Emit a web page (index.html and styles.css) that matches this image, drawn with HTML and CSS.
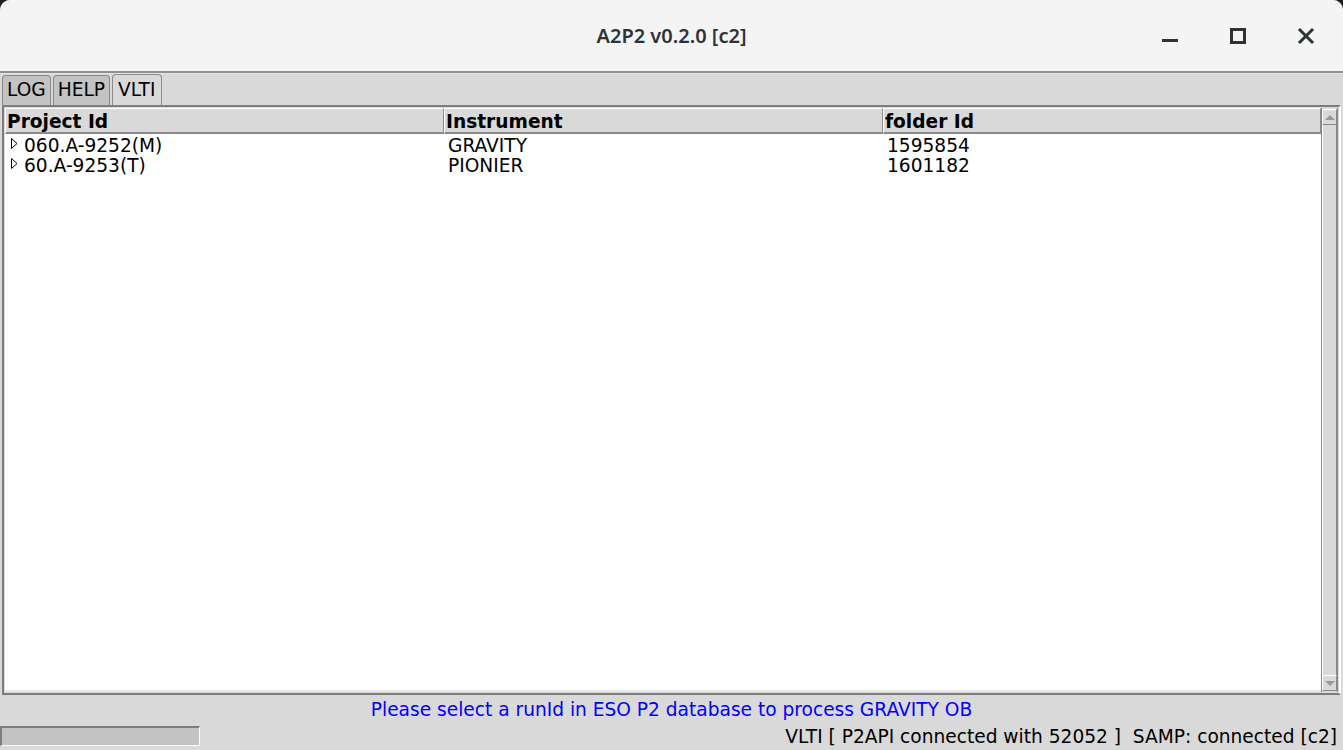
FILE: index.html
```html
<!DOCTYPE html>
<html>
<head>
<meta charset="utf-8">
<link rel="stylesheet" href="styles.css">
</head>
<body>
<div class="window">
  <div class="titlebar">
    <div class="title">A2P2 v0.2.0 [c2]</div>
    <div class="controls">
      <svg class="ctl" width="18" height="18" viewBox="0 0 18 18"><rect x="1" y="12" width="16" height="3" fill="#2e3436"/></svg>
      <svg class="ctl" width="18" height="18" viewBox="0 0 18 18"><rect x="2.5" y="2.5" width="13" height="13" fill="none" stroke="#2e3436" stroke-width="3"/></svg>
      <svg class="ctl" width="18" height="18" viewBox="0 0 18 18"><path d="M2 2 L16 16 M16 2 L2 16" stroke="#2e3436" stroke-width="3"/></svg>
    </div>
  </div>
  <div class="tabs">
    <div class="tab">LOG</div>
    <div class="tab">HELP</div>
    <div class="tab active">VLTI</div>
  </div>
  <div class="panel">
    <div class="tree">
      <div class="table">
        <div class="header">
          <div class="hcell">Project Id</div>
          <div class="hcell">Instrument</div>
          <div class="hcell">folder Id</div>
        </div>
        <div class="rows">
          <div class="row">
            <div class="cell first"><svg class="arrow" width="7" height="11" viewBox="0 0 7 11"><path d="M0.5 0.5 L6 5.5 L0.5 10.5 Z" fill="#fff" stroke="#000" stroke-width="1"/></svg>060.A-9252(M)</div>
            <div class="cell">GRAVITY</div>
            <div class="cell">1595854</div>
          </div>
          <div class="row">
            <div class="cell first"><svg class="arrow" width="7" height="11" viewBox="0 0 7 11"><path d="M0.5 0.5 L6 5.5 L0.5 10.5 Z" fill="#fff" stroke="#000" stroke-width="1"/></svg>60.A-9253(T)</div>
            <div class="cell">PIONIER</div>
            <div class="cell">1601182</div>
          </div>
        </div>
      </div>
      <div class="scrollbar">
        <div class="sbtn"><span class="up"></span></div>
        <div class="trough"></div>
        <div class="sbtn"><span class="down"></span></div>
      </div>
    </div>
  </div>
  <div class="message">Please select a runId in ESO P2 database to process GRAVITY OB</div>
  <div class="statusbar">
    <div class="progress"></div>
    <div class="status">VLTI [ P2API connected with 52052 ]&nbsp; SAMP: connected [c2]</div>
  </div>
</div>
</body>
</html>
```

FILE: styles.css
```css
* { box-sizing: border-box; }
html, body { margin: 0; padding: 0; background: #1e1e1e; }
body {
  width: 1343px; height: 750px; overflow: hidden;
  font-family: "DejaVu Sans", sans-serif;
}
.window {
  width: 1343px; height: 750px;
  display: flex; flex-direction: column;
  background: #d9d9d9;
  border-radius: 10px 10px 0 0;
  overflow: hidden;
}
.titlebar {
  height: 73px; flex: none;
  background: #f4f4f4;
  border-bottom: 2px solid #8f8f8b;
  position: relative;
  display: flex; align-items: center; justify-content: center;
}
.title {
  font-family: "Noto Sans", sans-serif;
  font-weight: 600;
  font-size: 20px;
  color: #2e3436;
  margin-top: -1px;
}
.controls {
  position: absolute; right: 28px; top: 27px;
  display: flex; gap: 50px;
}
.ctl { display: block; }
.tabs {
  height: 32px; flex: none;
  display: flex; align-items: flex-end;
  padding-left: 2px;
  border-top: 1px solid #e4e4e4;
}
.tab {
  height: 30px;
  padding: 0 4px;
  font-size: 18.6px; line-height: 28px; color: #000;
  background: #c3c3c3;
  border: 1px solid #8a8a8a;
  border-bottom: none;
  border-radius: 4px 4px 0 0;
  margin-right: 2px;
}
.tab.active { background: #d9d9d9; height: 31px; padding: 0 6px 0 5px; line-height: 29px; }
.panel {
  flex: 1;
  margin: 0 2px 0 2px;
  border-top: 2px solid #7d7d7d;
  border-left: 2px solid #7d7d7d;
  border-right: 2px solid #ffffff;
  border-bottom: 2px solid #7d7d7d;
  padding: 1px;
  display: flex;
}
.tree {
  flex: 1; display: flex;
  background: #d9d9d9;
}
.table {
  flex: 1; display: flex; flex-direction: column;
  background: #ffffff;
  border-bottom: 2px solid #e8e8e8;
}
.header {
  display: grid; grid-template-columns: 439px 439px 1fr;
  height: 26px; flex: none;
}
.hcell {
  background: #d9d9d9;
  border-top: 1px solid #ffffff;
  border-left: 1px solid #ffffff;
  border-right: 1px solid #8a8a8a;
  border-bottom: 2px solid #8a8a8a;
  font-weight: 700; font-size: 18.6px; line-height: 25px;
  padding-left: 1px;
  white-space: nowrap; overflow: hidden;
}
.rows { flex: 1; padding-top: 1px; }
.row {
  display: grid; grid-template-columns: 439px 439px 1fr;
  height: 20px;
}
.cell {
  font-size: 18.6px; line-height: 21px;
  padding-left: 4px; white-space: nowrap;
}
.cell.first { padding-left: 6px; display: flex; align-items: center; }
.arrow {
  display: block; flex: none;
  margin-right: 6px;
  margin-top: -5px;
}
.scrollbar {
  width: 17px; flex: none;
  display: flex; flex-direction: column;
  border-left: 1px solid #8a8a8a;
  border-right: 1px solid #8a8a8a;
  padding: 1px 0;
}
.sbtn {
  height: 16px; flex: none;
  background: #d9d9d9;
  border-top: 1px solid #ffffff;
  border-left: 1px solid #ffffff;
  border-right: 1px solid #8a8a8a;
  border-bottom: 1px solid #8a8a8a;
  display: flex; align-items: center; justify-content: center;
}
.trough {
  flex: 1;
  background: #d9d9d9;
  border-left: 1px solid #ffffff;
  border-right: 1px solid #8a8a8a;
}
.up {
  width: 0; height: 0;
  border-left: 5px solid transparent; border-right: 5px solid transparent;
  border-bottom: 5px solid #9a9a9a;
}
.down {
  width: 0; height: 0;
  border-left: 5px solid transparent; border-right: 5px solid transparent;
  border-top: 5px solid #9a9a9a;
}
.message {
  height: 27px; flex: none;
  text-align: center;
  color: #0000ff;
  font-size: 18.6px; line-height: 29px;
}
.statusbar {
  height: 28px; flex: none;
  display: flex; align-items: center; justify-content: space-between;
  padding-right: 6px;
}
.progress {
  width: 200px; height: 20px;
  background: #c3c3c3;
  border-top: 2px solid #7d7d7d;
  border-left: 2px solid #7d7d7d;
  border-right: 1px solid #ffffff;
  border-bottom: 1px solid #ffffff;
}
.status {
  font-size: 18.6px; line-height: 22px;
  margin-top: 2px;
}
```
